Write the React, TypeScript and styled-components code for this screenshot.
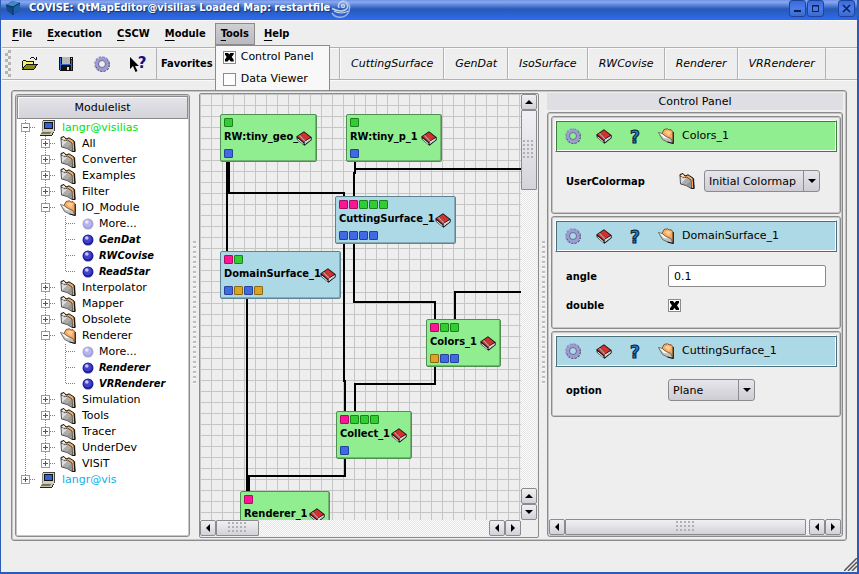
import React from 'react';
import styled, { createGlobalStyle, css } from 'styled-components';

const Global = createGlobalStyle`
  * { box-sizing: border-box; }
  body { margin: 0; background: #eeeeee; }
  body, button, input, select {
    font-family: 'DejaVu Sans', sans-serif;
    font-size: 11px;
    line-height: 16px;
    color: #000;
  }
  button { padding: 0; margin: 0; }
  ul { list-style: none; margin: 0; padding: 0; }
`;

const bold = css`
  font-family: 'DejaVu Sans Condensed', 'Noto Sans', sans-serif;
  font-weight: 700;
`;
const panelFrame = css`
  border: 1px solid #8b8b8b;
  border-radius: 3px;
  box-shadow: inset 0 0 0 1px #c6c6c6;
`;
const raised = 'linear-gradient(#f0f0f4, #d2d2d8)';

/* ---------- window ---------- */

const Window = styled.div`
  min-height: 100vh;
  display: flex;
  flex-direction: column;
  border: solid #2a5cb4;
  border-width: 0 2px 2px 1px;
  background: #eeeeee;
`;
const TitleBar = styled.header`
  flex: none;
  height: 20px;
  display: flex;
  align-items: flex-start;
  padding: 0 2px 0 4px;
  color: #fff;
  background: linear-gradient(#6f92e6 0, #8aa8ee 2px, #4f7bd4 6px, #265ab6 9px, #2a5fca 13px, #3068ee 19px);
`;
const TitleText = styled.h1`
  ${bold}
  font-size: 11px;
  line-height: 16px;
  margin: 0 0 0 8px;
  white-space: nowrap;
  text-shadow: 1px 1px 1px #12306e;
`;
const WindowButtons = styled.div`
  margin-left: auto;
  display: flex;
  gap: 1px;
`;
const WindowButton = styled.button<{ $apart?: boolean }>`
  width: 17px;
  height: 17px;
  margin-left: ${p => (p.$apart ? '13px' : '0')};
  border: 1px solid #1b459c;
  border-radius: 3px;
  background: linear-gradient(#3f68d8, #4a7cf0 50%, #3c6cc4);
  display: grid;
  place-items: center;
`;

/* ---------- menu bar ---------- */

const MenuBar = styled.nav`
  flex: none;
  height: 27px;
  display: flex;
  align-items: flex-start;
  gap: 3px;
  padding: 2px 5px 0;
  border-top: 1px solid #fafafa;
`;
const MenuAnchor = styled.div`
  position: relative;
`;
const MenuButton = styled.button<{ $open?: boolean }>`
  ${bold}
  height: 22px;
  padding: 0 5px 1px;
  border: 1px solid ${p => (p.$open ? '#8b8b8b' : 'transparent')};
  background: ${p => (p.$open ? 'linear-gradient(#cfcfd4, #b9b9c0)' : 'none')};
  u { text-underline-offset: 3px; }
`;
const Popup = styled.div`
  position: absolute;
  z-index: 5;
  top: 22px;
  left: 0;
  width: 115px;
  padding: 0 7px;
  border: 1px solid #8b8b8b;
  background: #f8f8f8;
`;
const PopupItem = styled.label`
  height: 22px;
  display: flex;
  align-items: center;
  gap: 5px;
  white-space: nowrap;
`;
const Check = styled.input.attrs({ type: 'checkbox' })`
  appearance: none;
  flex: none;
  width: 13px;
  height: 13px;
  margin: 0;
  border: 1px solid #8b8b8b;
  background: #fdfdfd;
  display: grid;
  place-items: center;
  &:checked::before {
    content: '';
    width: 9px;
    height: 9px;
    background: #000;
    clip-path: polygon(0 0, 33% 0, 50% 22%, 67% 0, 100% 0, 100% 20%, 78% 50%, 100% 80%, 100% 100%, 67% 100%, 50% 78%, 33% 100%, 0 100%, 0 80%, 22% 50%, 0 20%);
  }
`;

/* ---------- tool bar ---------- */

const ToolBar = styled.div`
  flex: none;
  height: 33px;
  display: flex;
  align-items: stretch;
  margin: 0 0 0 1px;
  border-top: 1px solid #b2b2b2;
  border-bottom: 1px solid #b2b2b2;
  box-shadow: inset 0 1px #fafafa, 0 1px #fafafa;
`;
const Handle = styled.span`
  width: 6px;
  margin: 2px 0 2px 3px;
  background: conic-gradient(#b4b4b4 25%, transparent 0 50%, #b4b4b4 0 75%, transparent 0) 0 0 / 6px 6px;
`;
const ToolIcons = styled.div`
  display: flex;
  align-items: center;
  gap: 18px;
  padding: 0 9px 0 10px;
  border-right: 1px solid #b2b2b2;
`;
const ToolButton = styled.button`
  width: 18px;
  height: 18px;
  border: 0;
  background: none;
  display: grid;
  place-items: center;
`;
const Favorites = styled.strong`
  ${bold}
  width: 183px;
  padding-left: 4px;
  border-right: 1px solid #b2b2b2;
  line-height: 31px;
`;
const FavoriteButton = styled.button`
  border: 0;
  border-right: 1px solid #b2b2b2;
  box-shadow: inset 1px 0 #fafafa;
  background: none;
  padding: 1px 10px 0 11px;
  font-style: italic;
`;

/* ---------- work area ---------- */

const Work = styled.main`
  ${panelFrame}
  flex: 1;
  display: flex;
  margin: 10px 10px 31px;
  padding: 2px 3px;
`;
const Splitter = styled.div<{ $width: number }>`
  flex: none;
  width: ${p => p.$width}px;
  display: flex;
  align-items: center;
  justify-content: center;
  &::before {
    content: '';
    width: 3px;
    height: 143px;
    margin-bottom: 7px;
    background: linear-gradient(#bdbdbd 2px, #fafafa 2px, #fafafa 3px, transparent 3px) 0 0 / 3px 5px;
  }
`;
const TreePanel = styled.section`
  ${panelFrame}
  flex: 0 0 175px;
  margin: 1px 0;
  background: #fff;
`;
const TreeHeader = styled.h2`
  height: 23px;
  margin: 1px 1px 0;
  border: 1px solid #8b8b8b;
  box-shadow: inset 1px 1px #f8f8f8;
  background: linear-gradient(#e4e4ea, #d3d3d9);
  font-size: 11px;
  line-height: 22px;
  font-weight: 400;
  text-align: center;
`;
const TreeRows = styled.ul`
  padding-top: 1px;
`;
const TreeRow = styled.li`
  height: 16px;
  display: flex;
  align-items: center;
`;
const TreeIcon = styled.span`
  width: 16px;
  height: 16px;
  margin-left: 4px;
  display: grid;
  place-items: center;
`;
const TreeLabel = styled.span<{ $kind: Kind; $color?: string }>`
  margin-left: ${p => (p.$kind === 'ball' || p.$kind === 'more' ? '3px' : '6px')};
  color: ${p => p.$color ?? '#000'};
  white-space: nowrap;
  ${p => p.$kind === 'ball' && css`${bold} font-style: italic;`}
`;

/* ---------- map canvas ---------- */

const MapPanel = styled.section`
  flex: 1 1 0;
  min-width: 0;
  display: grid;
  grid-template: 1fr 16px / 1fr 16px;
  padding: 0 1px 1px 0;
  border: 1px solid #8b8b8b;
  border-radius: 2px;
`;
const MapView = styled.div`
  position: relative;
  overflow: hidden;
  background:
    linear-gradient(#c6c6c6 1px, transparent 1px) 0 0 / 11px 11px,
    linear-gradient(90deg, #c6c6c6 1px, transparent 1px) 0 0 / 11px 11px,
    #eeeeee;
`;
const Edges = styled.svg`
  position: absolute;
  inset: 0;
  width: 100%;
  height: 100%;
`;
const NodeBox = styled.article<{ $x: number; $y: number; $w: number; $tone: Tone }>`
  position: absolute;
  left: ${p => p.$x}px;
  top: ${p => p.$y}px;
  width: ${p => p.$w}px;
  height: 48px;
  padding: 3px;
  border: 1px solid ${p => (p.$tone === 'green' ? '#4f8f4f' : '#5d8492')};
  border-radius: 2px;
  box-shadow: inset -1px -1px ${p => (p.$tone === 'green' ? '#6fb56f' : '#86acb9')};
  background: ${p => (p.$tone === 'green' ? '#90ee90' : '#add8e6')};
  display: flex;
  flex-direction: column;
  justify-content: space-between;
`;
const Ports = styled.div`
  display: flex;
  gap: 1px;
  height: 9px;
`;
const Port = styled.span<{ $c: PortColor }>`
  width: 9px;
  height: 9px;
  border: 1px solid ${p => portColors[p.$c][1]};
  border-radius: 1px;
  background: ${p => portColors[p.$c][0]};
`;
const NodeTitle = styled.div`
  ${bold}
  height: 16px;
  display: flex;
  align-items: center;
  padding-right: 1px;
  line-height: 14px;
  span {
    flex: 1;
    width: 0;
    padding-bottom: 2px;
    white-space: nowrap;
  }
  svg {
    flex: none;
    position: relative;
  }
`;

/* ---------- scroll bars ---------- */

const ScrollBar = styled.div<{ $vertical?: boolean }>`
  display: flex;
  flex: none;
  flex-direction: ${p => (p.$vertical ? 'column' : 'row')};
  ${p => (p.$vertical ? 'width: 16px;' : 'height: 16px;')}
  min-width: 0;
  background: conic-gradient(#e6e6e6 25%, #fcfcfc 0 50%, #e6e6e6 0 75%, #fcfcfc 0) 0 0 / 2px 2px;
`;
const ScrollButton = styled.button`
  flex: none;
  width: 16px;
  height: 16px;
  border: 1px solid #8b8b8b;
  border-radius: 2px;
  background: ${raised};
  display: grid;
  place-items: center;
`;
const Thumb = styled.div<{ $size?: number; $vertical?: boolean }>`
  ${p => (p.$size ? `flex: 0 0 ${p.$size}px;` : 'flex: 1; margin-right: 3px;')}
  border: 1px solid #8b8b8b;
  border-radius: 1px;
  background: ${p => (p.$vertical ? 'linear-gradient(#f0f0f6, #d4d4da)' : raised)};
  display: grid;
  place-items: center;
  &::before {
    content: '';
    width: ${p => (p.$vertical ? 12 : 20)}px;
    height: ${p => (p.$vertical ? 20 : 12)}px;
    background: radial-gradient(circle at 1px 1px, #b0b0b0 1px, transparent 1px) 0 0 / 4px 4px;
  }
`;
const ScrollGap = styled.span`
  flex: 1;
`;

/* ---------- control panel ---------- */

const ControlPanel = styled.section`
  flex: 0 0 296px;
  display: flex;
  flex-direction: column;
  gap: 2px;
`;
const ControlTitle = styled.h2`
  height: 17px;
  margin: 0;
  background: #dedee4;
  font-size: 11px;
  line-height: 18px;
  font-weight: 400;
  text-align: center;
`;
const ControlFrame = styled.div`
  ${panelFrame}
  flex: 1;
  display: flex;
  flex-direction: column;
  padding: 1px;
  margin-bottom: 1px;
`;
const ControlList = styled.div`
  flex: 1;
  display: flex;
  flex-direction: column;
  gap: 2px;
  padding: 2px 0 0 2px;
`;
const ModuleCard = styled.section`
  ${panelFrame}
  padding: 3px;
`;
const ModuleHead = styled.header<{ $tone: Tone }>`
  --edge: ${p => (p.$tone === 'green' ? '#3f7d3f' : '#4c6f7c')};
  height: 32px;
  display: flex;
  align-items: center;
  gap: 15px;
  padding-left: 9px;
  border: 1px solid;
  border-color: #fff var(--edge) var(--edge) #fff;
  box-shadow: inset 1px 1px var(--edge), inset -1px -1px #fff;
  background: ${p => (p.$tone === 'green' ? '#90ee90' : '#add8e6')};
`;
const HeadButton = styled.button`
  width: 16px;
  height: 16px;
  border: 0;
  background: none;
  display: grid;
  place-items: center;
`;
const HeadName = styled.h3`
  margin: 0 0 0 -7px;
  font-size: 11px;
  line-height: 16px;
  font-weight: 400;
`;
const Fields = styled.div<{ $pad: number }>`
  display: flex;
  flex-direction: column;
  gap: 12px;
  padding: ${p => p.$pad}px 11px;
`;
const Field = styled.div`
  display: flex;
  align-items: center;
`;
const FieldLabel = styled.label`
  ${bold}
  flex: 0 0 102px;
  line-height: 13px;
`;
const TextBox = styled.input`
  flex: 1;
  min-width: 0;
  height: 22px;
  padding: 0 5px;
  border: 1px solid #8b8b8b;
  border-radius: 2px;
  background: #fff;
`;
const PickIcon = styled.button`
  width: 16px;
  height: 16px;
  margin: 0 9px 0 11px;
  border: 0;
  background: none;
  display: grid;
  place-items: center;
`;
const SelectWrap = styled.span<{ $w: number }>`
  position: relative;
  width: ${p => p.$w}px;
  height: 22px;
  select {
    appearance: none;
    width: 100%;
    height: 100%;
    padding: 1px 18px 0 4px;
    border: 1px solid #8b8b8b;
    border-radius: 3px;
    background: linear-gradient(#e6e6ec, #cdcdd3);
  }
  span {
    position: absolute;
    top: 1px;
    right: 1px;
    bottom: 1px;
    width: 16px;
    border-left: 1px solid #8b8b8b;
    display: grid;
    place-items: center;
    pointer-events: none;
  }
`;
const Grip = styled.div`
  position: absolute;
  right: 2px;
  bottom: 3px;
  line-height: 0;
`;
const Shell = styled.div`
  position: relative;
`;

/* ---------- drawings ---------- */

const FolderClosed = () => (
  <svg width="16" height="16" viewBox="0 0 16 16">
    <path d="M1 3V1.500L4 .5 6 3 9 1.800 14 5 15 15.500H12z" fill="#f7ad66" stroke="#111" />
    <path d="M1 3l4.500 2L7.500 4 12 7l.5 8.500L7 12.500 1.500 11z" fill="#acacac" stroke="#333" strokeWidth=".8" />
    <path d="M1.800 3.800L5 5.300 7.500 5 2 10.500z" fill="#dedede" />
    <path d="M1.500 2.500L4 1.500 5 3 4 4z" fill="#fff1dd" />
    <path d="M11.500 8v6.500L7 12z" fill="#949494" />
    <path d="M14.600 5.500l.4 10" stroke="#111" />
  </svg>
);
const FolderOpen = () => (
  <svg width="16" height="16" viewBox="0 0 16 16">
    <path d="M4 5.500L6 1.500 9.500.7l1.500 1.300 2-.5L15 4v11.500l-3-2z" fill="#fba85a" stroke="#6b4420" strokeWidth=".8" />
    <path d="M6.500 4L10 2.500 13 4l-2 4z" fill="#ffcf9c" />
    <path d="M.5 4.500l3.500 1 4 3 5 2L15 15.500 9.500 14l-5-2.500z" fill="#c2c2bc" stroke="#555" strokeWidth=".8" />
    <path d="M1.300 5.200l2.500.8 4 3 3 1.500-5-.5z" fill="#fbfbf6" />
    <path d="M15.300 4v11.500L9.500 14" fill="none" stroke="#111" />
  </svg>
);
const Book = () => (
  <svg width="16" height="15" viewBox="0 0 16 15">
    <path d="M.3 5.500L8 .2l7.700 6V9L8.500 14.800.8 8.500z" fill="#111" />
    <path d="M8.700 10.700L14.700 7v1.800L8.700 13.300z" fill="#fff" />
    <path d="M9 12l5.500-3.800" stroke="#999" strokeWidth=".6" />
    <path d="M4.500 3.500L8 1.300 14.300 6.300 9 9.800z" fill="#d43030" />
    <path d="M1.300 5.600l2.700-1.800 4.700 6.400-.8 1z" fill="#d43030" />
    <path d="M3 4.800l1.300-.9 5 5.700-.8.800z" fill="#b0a0a0" />
    <path d="M1.500 7.200l6 5v1.200l-6-5z" fill="#eee" />
  </svg>
);
const Gear = () => (
  <svg width="16" height="16" viewBox="0 0 16 16">
    <circle cx="8.500" cy="8.600" r="6.600" fill="none" stroke="#46465e" strokeWidth="1.800" strokeDasharray="2.400 1.050" />
    <circle cx="7.900" cy="7.900" r="6.600" fill="none" stroke="#9191c8" strokeWidth="2.200" strokeDasharray="2.400 1.050" />
    <circle cx="8" cy="8" r="4.900" fill="none" stroke="#9c9cd2" strokeWidth="3" />
    <circle cx="8" cy="8" r="3.500" fill="none" stroke="#62628e" strokeWidth=".9" />
  </svg>
);
const Help = () => (
  <svg width="16" height="18" viewBox="0 0 16 18">
    <text x="8" y="15" textAnchor="middle" fontFamily="DejaVu Sans, sans-serif" fontWeight="700" fontSize="17"
      fill="#1f86d0" stroke="#081838" strokeWidth="1">?</text>
  </svg>
);
const Computer = () => (
  <svg width="16" height="16" viewBox="0 0 16 16" shapeRendering="crispEdges">
    <path d="M3 1h12v10H3z" fill="#d4d0b8" />
    <path d="M3 0h12v1H3zM14 1h1v10h-1z" fill="#444" />
    <path d="M2 1h1v10H2z" fill="#888" />
    <path d="M4 2h9v7H4z" fill="#111" />
    <path d="M5 3h7v5H5z" fill="#2f62d8" />
    <path d="M2 11h12l-2 4H0z" fill="#c9c5ae" />
    <path d="M2 12h9v1H2zM1 14h9v-1H1z" fill="#77745f" />
    <path d="M0 15h12v1H0zM12 13h1v2h-1zM13 12h1v1h-1z" fill="#222" />
  </svg>
);
const Ball = ({ pale }: { pale?: boolean }) => (
  <svg width="12" height="12" viewBox="0 0 12 12">
    <circle cx="6" cy="6" r="5.500" fill={pale ? '#a4a4dc' : '#24249c'} />
    <circle cx="5.600" cy="5.200" r="3.800" fill={pale ? '#b6b6ea' : '#4444cc'} />
    <circle cx="4.800" cy="4" r="1.800" fill={pale ? '#e8e8fa' : '#c8c8f6'} />
  </svg>
);
const OpenFile = () => (
  <svg width="18" height="16" viewBox="0 0 18 16" shapeRendering="crispEdges">
    <path d="M1 5h1V4h4v1h6v3H5L1 13z" fill="#f7f06a" />
    <path d="M2 4h3v1H2zM1 5h1v8H1zM5 5h7v1H5zM12 5h1v3h-1z" fill="#111" />
    <path d="M5 8h12l-4 5H1z" fill="#8a8a10" />
    <path d="M5 8h12v1H5zM1 13h12v1H1zM4 9h1v1H4zM3 10h1v1H3zM2 11h1v2H2zM15 9h1v1h-1zM14 10h1v2h-1zM13 12h1v1h-1z" fill="#111" />
    <path d="M9 2h1v1H9zM10 1h3v1h-3zM13 2h1v1h-1zM14 3h2v1h-2zM15 1h1v3h-1z" fill="#111" />
  </svg>
);
const Floppy = () => (
  <svg width="16" height="16" viewBox="0 0 16 16" shapeRendering="crispEdges">
    <path d="M1 1h14v14H2l-1-1z" fill="#111" />
    <path d="M2 2h1v12H2zM13 4h1v10h-1zM3 8h10v1H3z" fill="#3568c8" />
    <path d="M4 1h8v7H4z" fill="#b8b8b8" />
    <path d="M13 2h1v1h-1z" fill="#ddd" />
    <path d="M5 10h6v5H5z" fill="#111" />
    <path d="M9 11h2v3H9z" fill="#ddd" />
  </svg>
);
const WhatsThis = () => (
  <svg width="18" height="18" viewBox="0 0 18 18">
    <path d="M1 2v12l3-3 2.500 6 2-1-2.500-5h4z" fill="#000" />
    <text x="13" y="13" textAnchor="middle" fontFamily="DejaVu Sans, sans-serif" fontWeight="700" fontSize="15" fill="#101088">?</text>
  </svg>
);
const AppLogo = () => (
  <svg width="16" height="16" viewBox="0 0 16 16">
    <path d="M1 5l6-4 8 2-1 8-6 4-6-4z" fill="#134a86" />
    <path d="M1 5l6-4 8 2-7 4z" fill="#3c88c8" />
    <path d="M8 7l7-4-1 8-6 4z" fill="#1d62a8" />
    <path d="M1 5l7 2v8M8 7l7-4" fill="none" stroke="#0a2c5c" />
  </svg>
);
const Swirl = () => (
  <svg width="22" height="20" viewBox="0 0 22 20" fill="none" stroke="#c4d2ee" strokeWidth="1.500">
    <circle cx="13" cy="6" r="1.500" />
    <path d="M9 8a4.500 4.500 0 1 1 7 1.500c-4 2.500-10 1-14-1" />
    <path d="M14 1c5 0 7 5 5 10-3 8-13 8-17 2" stroke="#9fb4e0" />
    <path d="M4 11c5 3 11 2 14 0" stroke="#e6edfa" strokeWidth="1" />
  </svg>
);

const arrowPaths = {
  up: 'M0 6L4 2l4 4z',
  down: 'M0 2h8L4 6z',
  left: 'M6 0v8L2 4z',
  right: 'M2 0l4 4-4 4z',
};
const Arrow = ({ dir }: { dir: keyof typeof arrowPaths }) => (
  <svg width="8" height="8" viewBox="0 0 8 8"><path d={arrowPaths[dir]} fill="#000" /></svg>
);

type Cell = '+' | '-' | '*' | 'l' | 't' | 'e';
/* '+' / '-' expander on a running line, '*' expander ending the line,
   'l' line, 't' branch, 'e' last branch */
const Guide = ({ cell }: { cell: Cell }) => {
  const box = cell === '+' || cell === '-' || cell === '*';
  const end = cell === 'e' || cell === '*';
  return (
    <svg width="20" height="16" viewBox="0 0 20 16" fill="none" stroke="#808080" shapeRendering="crispEdges">
      <path d={`M9.500 0V${end ? 8 : 16}`} strokeDasharray="1 1" />
      {cell !== 'l' && <path d="M10 7.500H19" strokeDasharray="1 1" />}
      {box && <rect x="5.500" y="3.500" width="8" height="8" fill="#fff" stroke="#9b9b9b" />}
      {box && <path d="M7 7.500h5" stroke="#555" />}
      {(cell === '+' || cell === '*') && <path d="M9.500 5v5" stroke="#555" />}
    </svg>
  );
};

/* ---------- data ---------- */

type Kind = 'host' | 'closed' | 'open' | 'more' | 'ball';
type Tone = 'green' | 'blue';
type PortColor = 'p' | 'g' | 'b' | 'o';

const portColors: Record<PortColor, [string, string]> = {
  p: ['#ff1493', '#a80d62'],
  g: ['#32cd32', '#1c801c'],
  b: ['#4169e1', '#26419a'],
  o: ['#daa520', '#8c6812'],
};

const tree: { cells: string; kind: Kind; label: string; color?: string }[] = [
  { cells: '-', kind: 'host', label: 'langr@visilias', color: '#00e010' },
  { cells: 'l+', kind: 'closed', label: 'All' },
  { cells: 'l+', kind: 'closed', label: 'Converter' },
  { cells: 'l+', kind: 'closed', label: 'Examples' },
  { cells: 'l+', kind: 'closed', label: 'Filter' },
  { cells: 'l-', kind: 'open', label: 'IO_Module' },
  { cells: 'llt', kind: 'more', label: 'More...' },
  { cells: 'llt', kind: 'ball', label: 'GenDat' },
  { cells: 'llt', kind: 'ball', label: 'RWCovise' },
  { cells: 'lle', kind: 'ball', label: 'ReadStar' },
  { cells: 'l+', kind: 'closed', label: 'Interpolator' },
  { cells: 'l+', kind: 'closed', label: 'Mapper' },
  { cells: 'l+', kind: 'closed', label: 'Obsolete' },
  { cells: 'l-', kind: 'open', label: 'Renderer' },
  { cells: 'llt', kind: 'more', label: 'More...' },
  { cells: 'llt', kind: 'ball', label: 'Renderer' },
  { cells: 'lle', kind: 'ball', label: 'VRRenderer' },
  { cells: 'l+', kind: 'closed', label: 'Simulation' },
  { cells: 'l+', kind: 'closed', label: 'Tools' },
  { cells: 'l+', kind: 'closed', label: 'Tracer' },
  { cells: 'l+', kind: 'closed', label: 'UnderDev' },
  { cells: 'l*', kind: 'closed', label: 'VISiT' },
  { cells: '*', kind: 'host', label: 'langr@vis', color: '#12aee6' },
];

const kindIcons: Record<Kind, React.ReactNode> = {
  host: <Computer />,
  closed: <FolderClosed />,
  open: <FolderOpen />,
  more: <Ball pale />,
  ball: <Ball />,
};

const nodes: { name: string; x: number; y: number; w: number; tone: Tone; top: string; bottom: string }[] = [
  { name: 'RW:tiny_geo_', x: 20, y: 20, w: 97, tone: 'green', top: 'g', bottom: 'b' },
  { name: 'RW:tiny_p_1', x: 146, y: 20, w: 96, tone: 'green', top: 'g', bottom: 'b' },
  { name: 'CuttingSurface_1', x: 135, y: 102, w: 121, tone: 'blue', top: 'ppggg', bottom: 'bbbb' },
  { name: 'DomainSurface_1', x: 20, y: 157, w: 121, tone: 'blue', top: 'pg', bottom: 'bobo' },
  { name: 'Colors_1', x: 226, y: 225, w: 75, tone: 'green', top: 'pgg', bottom: 'obb' },
  { name: 'Collect_1', x: 136, y: 317, w: 76, tone: 'green', top: 'pggg', bottom: 'b' },
  { name: 'Renderer_1', x: 40, y: 397, w: 90, tone: 'green', top: 'p', bottom: '' },
];

const edges = [
  'M27 68V157',
  'M29 68V99H144V287H145V317',
  'M155 68V79H154V102',
  'M155 75H2000',
  'M154 150V208H235V225',
  'M255 225V198H2000',
  'M235 273V290H155V317',
  'M145 365V382H49V397',
  'M47 205V397',
];

const menus = ['File', 'Execution', 'CSCW', 'Module', 'Tools', 'Help'];
const favorites = ['CuttingSurface', 'GenDat', 'IsoSurface', 'RWCovise', 'Renderer', 'VRRenderer'];

/* ---------- composition ---------- */

const ModuleHeader = ({ name, tone }: { name: string; tone: Tone }) => (
  <ModuleHead $tone={tone}>
    <HeadButton aria-label="Execute"><Gear /></HeadButton>
    <HeadButton aria-label="Manual"><Book /></HeadButton>
    <HeadButton aria-label="Help"><Help /></HeadButton>
    <HeadButton aria-label="Fold"><FolderOpen /></HeadButton>
    <HeadName>{name}</HeadName>
  </ModuleHead>
);

const Select = ({ id, value, width }: { id: string; value: string; width: number }) => (
  <SelectWrap $w={width}>
    <select id={id} defaultValue={value}><option>{value}</option></select>
    <span><Arrow dir="down" /></span>
  </SelectWrap>
);

const portRow = (ports: string) => (
  <Ports>{ports.split('').map((c, i) => <Port key={i} $c={c as PortColor} />)}</Ports>
);

export default function App() {
  return (
    <Shell>
      <Global />
      <Window>
        <TitleBar>
          <AppLogo />
          <TitleText>COVISE: QtMapEditor@visilias Loaded Map: restartfile</TitleText>
          <Swirl />
          <WindowButtons>
            <WindowButton aria-label="Minimize">
              <svg width="9" height="9"><path d="M1 6h7v2H1z" fill="#0c1f4e" /></svg>
            </WindowButton>
            <WindowButton aria-label="Maximize">
              <svg width="9" height="9"><path d="M1.500 1.500h6v6h-6zM1 2h7" fill="none" stroke="#0c1f4e" /></svg>
            </WindowButton>
            <WindowButton aria-label="Close" $apart>
              <svg width="9" height="9"><path d="M1 1l7 7M8 1L1 8" stroke="#0c1f4e" strokeWidth="1.500" /></svg>
            </WindowButton>
          </WindowButtons>
        </TitleBar>

        <MenuBar>
          {menus.map(m => (
            <MenuAnchor key={m}>
              <MenuButton $open={m === 'Tools'}><u>{m[0]}</u>{m.slice(1)}</MenuButton>
              {m === 'Tools' && (
                <Popup>
                  <PopupItem><Check defaultChecked />Control Panel</PopupItem>
                  <PopupItem><Check />Data Viewer</PopupItem>
                </Popup>
              )}
            </MenuAnchor>
          ))}
        </MenuBar>

        <ToolBar>
          <Handle />
          <ToolIcons>
            <ToolButton aria-label="Open"><OpenFile /></ToolButton>
            <ToolButton aria-label="Save"><Floppy /></ToolButton>
            <ToolButton aria-label="Execute"><Gear /></ToolButton>
            <ToolButton aria-label="What's this"><WhatsThis /></ToolButton>
          </ToolIcons>
          <Favorites>Favorites</Favorites>
          {favorites.map(f => <FavoriteButton key={f}>{f}</FavoriteButton>)}
        </ToolBar>

        <Work>
          <TreePanel>
            <TreeHeader>Modulelist</TreeHeader>
            <TreeRows>
              {tree.map((row, i) => (
                <TreeRow key={i}>
                  {row.cells.split('').map((c, j) => <Guide key={j} cell={c as Cell} />)}
                  <TreeIcon>{kindIcons[row.kind]}</TreeIcon>
                  <TreeLabel $kind={row.kind} $color={row.color}>{row.label}</TreeLabel>
                </TreeRow>
              ))}
            </TreeRows>
          </TreePanel>

          <Splitter $width={9} />

          <MapPanel>
            <MapView>
              <Edges>
                {edges.map(d => <path key={d} d={d} fill="none" stroke="#000" strokeWidth="2" />)}
              </Edges>
              {nodes.map(n => (
                <NodeBox key={n.name} $x={n.x} $y={n.y} $w={n.w} $tone={n.tone}>
                  {portRow(n.top)}
                  <NodeTitle><span>{n.name}</span><Book /></NodeTitle>
                  {portRow(n.bottom)}
                </NodeBox>
              ))}
            </MapView>
            <ScrollBar $vertical>
              <ScrollButton aria-label="Scroll up"><Arrow dir="up" /></ScrollButton>
              <Thumb $size={80} $vertical />
              <ScrollGap />
              <ScrollButton aria-label="Scroll up"><Arrow dir="up" /></ScrollButton>
              <ScrollButton aria-label="Scroll down"><Arrow dir="down" /></ScrollButton>
            </ScrollBar>
            <ScrollBar>
              <ScrollButton aria-label="Scroll left"><Arrow dir="left" /></ScrollButton>
              <Thumb $size={43} />
              <ScrollGap />
              <ScrollButton aria-label="Scroll left"><Arrow dir="left" /></ScrollButton>
              <ScrollButton aria-label="Scroll right"><Arrow dir="right" /></ScrollButton>
            </ScrollBar>
          </MapPanel>

          <Splitter $width={8} />

          <ControlPanel>
            <ControlTitle>Control Panel</ControlTitle>
            <ControlFrame>
              <ControlList>
                <ModuleCard>
                  <ModuleHeader name="Colors_1" tone="green" />
                  <Fields $pad={18}>
                    <Field>
                      <FieldLabel htmlFor="colormap">UserColormap</FieldLabel>
                      <PickIcon aria-label="Browse"><FolderClosed /></PickIcon>
                      <Select id="colormap" value="Initial Colormap" width={116} />
                    </Field>
                  </Fields>
                </ModuleCard>
                <ModuleCard>
                  <ModuleHeader name="DomainSurface_1" tone="blue" />
                  <Fields $pad={13}>
                    <Field>
                      <FieldLabel htmlFor="angle">angle</FieldLabel>
                      <TextBox id="angle" defaultValue="0.1" />
                    </Field>
                    <Field>
                      <FieldLabel htmlFor="double">double</FieldLabel>
                      <Check id="double" defaultChecked />
                    </Field>
                  </Fields>
                </ModuleCard>
                <ModuleCard>
                  <ModuleHeader name="CuttingSurface_1" tone="blue" />
                  <Fields $pad={12}>
                    <Field>
                      <FieldLabel htmlFor="option">option</FieldLabel>
                      <Select id="option" value="Plane" width={87} />
                    </Field>
                  </Fields>
                </ModuleCard>
              </ControlList>
              <ScrollBar>
                <ScrollButton aria-label="Scroll left"><Arrow dir="left" /></ScrollButton>
                <Thumb />
                <ScrollButton aria-label="Scroll left"><Arrow dir="left" /></ScrollButton>
                <ScrollButton aria-label="Scroll right"><Arrow dir="right" /></ScrollButton>
              </ScrollBar>
            </ControlFrame>
          </ControlPanel>
        </Work>
      </Window>
      <Grip>
        <svg width="13" height="13" viewBox="0 0 13 13">
          <path d="M0 13L13 0M4 13l9-9M8 13l5-5" stroke="#555" strokeWidth="1.500" />
        </svg>
      </Grip>
    </Shell>
  );
}
